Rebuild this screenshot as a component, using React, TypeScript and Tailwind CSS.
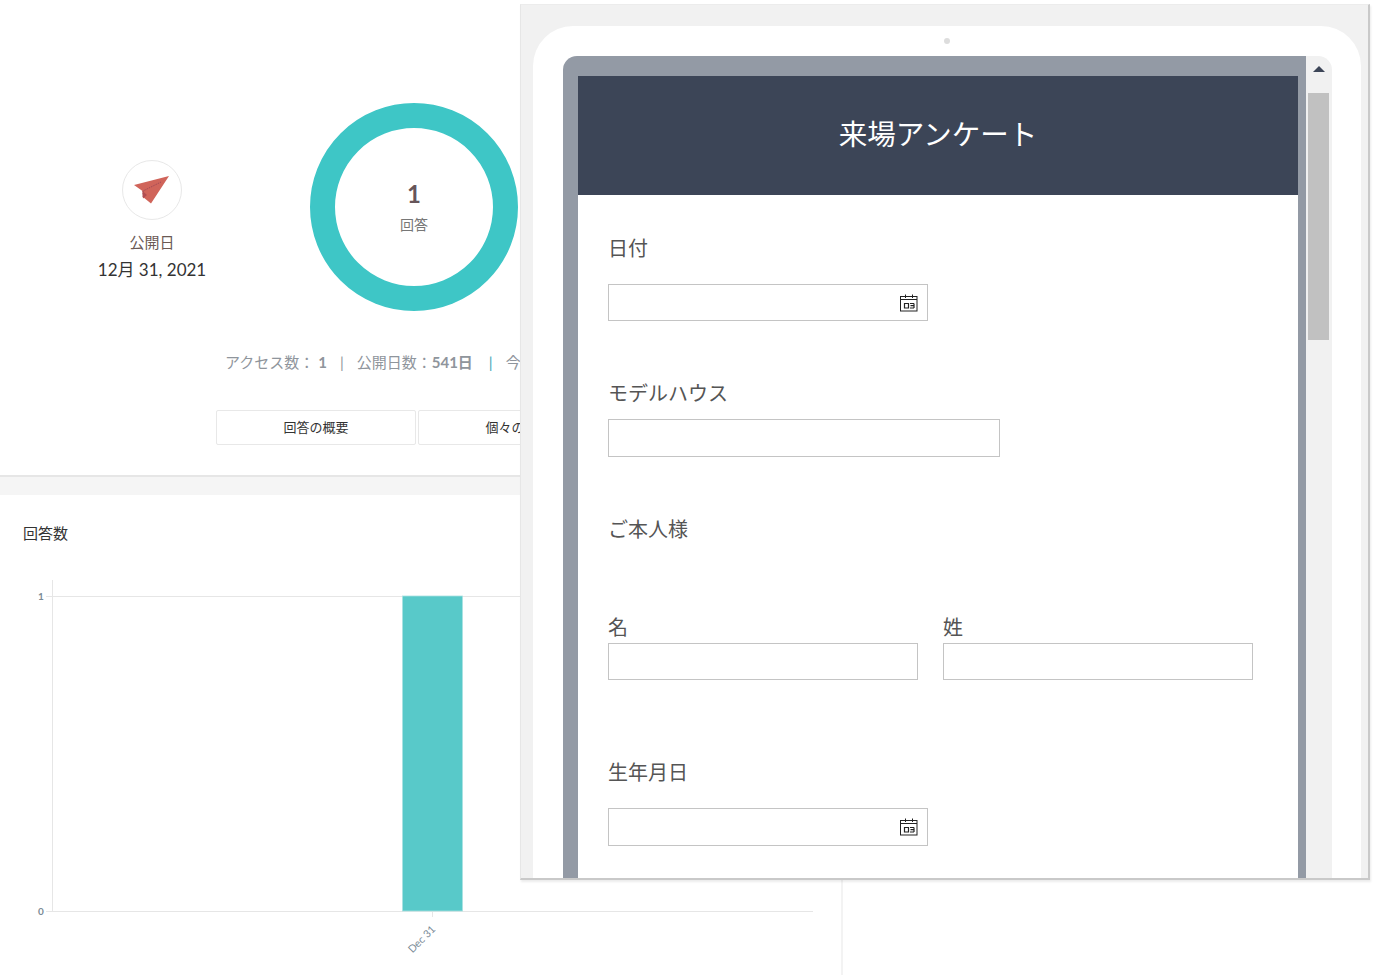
const font = { fontFamily: '"Lato","Noto Sans CJK JP",sans-serif' };

function CalIcon() {
  return (
    <svg width="18" height="18" viewBox="0 0 18 18" fill="none" stroke="#222" strokeWidth="1" className="absolute left-[291px] top-[9px]">
      <rect x="0.5" y="2.5" width="16.5" height="14.5" />
      <path d="M5.5 0.5v3.5M12.5 0.5v3.5M0.5 5.5h16.5" />
      <path d="M4.5 9.5h4v4.5h-4zM10 9.5h4M14 9.5v4.5M10.5 11.7h3.5M10 14h4" strokeWidth="1.2" />
    </svg>
  );
}

function Field({ w, h, cal, className = "" }: { w: string; h: string; cal?: boolean; className?: string }) {
  return (
    <div className={`relative border border-[#c4c4c4] bg-white ${w} ${h} ${className}`}>
      {cal && <CalIcon />}
    </div>
  );
}

function Label({ children, className = "" }: { children: React.ReactNode; className?: string }) {
  return <div className={`text-[20px] leading-[28px] text-[#555555] ${className}`}>{children}</div>;
}

function Background() {
  return (
    <div className="w-[843px] min-h-[975px]">
      <div className="h-[477px] border-b-2 border-[#e6e6e6] pt-[103px]">
        <div className="flex items-start">
          <div className="w-[304px] pt-[57px] flex flex-col items-center">
            <div className="w-[60px] h-[60px] rounded-full border border-[#e8e8e8] flex items-center justify-center">
              <svg width="36" height="30" viewBox="0 0 36 30">
                <path d="M0 10 35 1 17 28.5 9 22 9 23.5 8.5 16Z" fill="#d0645a" />
                <path d="M9 22 9 16 27 7" fill="none" stroke="#8e3f55" strokeWidth="0.7" strokeDasharray="1.5 1" />
                <path d="M9 23.5 8.5 16 13 20Z" fill="#b14e52" />
              </svg>
            </div>
            <div className="mt-[12px] text-[15px] leading-[20px] text-[#6b5a55]">公開日</div>
            <div className="mt-[5px] text-[17px] leading-[26px] text-[#333]">12月 31, 2021</div>
          </div>
          <div className="ml-[6px] w-[208px] h-[208px] rounded-full border-[25px] border-[#3ec6c6] flex flex-col items-center justify-start pt-[50px]">
            <div className="text-[24px] leading-[32px] font-bold text-[#66555a]">1</div>
            <div className="mt-[5px] text-[14px] leading-[20px] text-[#777]">回答</div>
          </div>
        </div>
        <div className="mt-[41px] ml-[225px] flex items-center whitespace-nowrap text-[15px] leading-[20px] text-[#8f959c]">
          <span>アクセス数：</span>
          <span className="ml-[4px] font-bold">1</span>
          <span className="ml-[13px]">|</span>
          <span className="ml-[13px]">公開日数：</span>
          <span className="font-bold">541日</span>
          <span className="ml-[16px] text-[#3ea6b8]">|</span>
          <span className="ml-[13px]">今</span>
        </div>
        <div className="mt-[38px] ml-[216px] flex gap-[2px] whitespace-nowrap text-[13px] text-[#333]">
          <div className="w-[200px] h-[35px] rounded-[2px] border border-[#e8e8e8] flex items-center justify-center">回答の概要</div>
          <div className="w-[200px] h-[35px] rounded-[2px] border border-[#e8e8e8] flex items-center justify-center">個々の回答</div>
        </div>
      </div>
      <div className="h-[18px] bg-[#f5f5f5]" />
      <div className="border-r-2 border-[#f3f3f3] h-[480px]">
        <div className="pt-[27px] pl-[23px] text-[15px] leading-[22px] text-[#333]">回答数</div>
        <svg width="841" height="420" viewBox="0 0 841 420" className="block mt-[36px]">
          <path d="M52.5 0V331M46 16.5H813M46 331.5H813M432.5 331V337" stroke="#e6e6e6" fill="none" />
          <rect x="402.5" y="16" width="60" height="315" fill="#58c9c9" stroke="#a8e2e2" strokeWidth="0.8" />
          <text x="41" y="20" textAnchor="middle" fontSize="10" fontWeight="700" fill="#7a8a96" fontFamily="Lato">1</text>
          <text x="41" y="335" textAnchor="middle" fontSize="10" fontWeight="700" fill="#7a8a96" fontFamily="Lato">0</text>
          <text x="0" y="0" fontSize="10.5" fill="#7a8a96" fontFamily="Lato" textAnchor="end" transform="translate(436 350) rotate(-45)">Dec 31</text>
        </svg>
      </div>
    </div>
  );
}

function Overlay() {
  return (
    <div className="absolute left-[520px] top-[4px] w-[850px] h-[876px] overflow-hidden bg-[#f1f1f1] border-l border-t border-l-[#e6e6e6] border-t-[#ececec] border-r-2 border-b-2 border-r-[#c9c9c9] border-b-[#c9c9c9] shadow-[1px_2px_2px_rgba(0,0,0,0.08)] pt-[21px] pl-[12px] pr-[7px]">
      <div className="relative h-[900px] rounded-t-[40px] bg-white pt-[30px] pl-[30px] pr-[29px]">
        <div className="absolute left-[411px] top-[12px] w-[6px] h-[6px] rounded-full bg-[#dddddd]" />
        <div className="flex h-[900px] rounded-t-[14px] overflow-hidden">
          <div className="w-[743px] shrink-0 bg-[#939aa5] pt-[20px] pl-[15px] pr-[8px]">
            <div className="h-full bg-white">
              <div className="h-[119px] pb-[3px] bg-[#3c4557] flex items-center justify-center text-[28.5px] text-white">来場アンケート</div>
              <div className="pl-[30px]">
                <Label className="pt-[39px]">日付</Label>
                <Field w="w-[320px]" h="h-[37px]" cal className="mt-[22px]" />
                <Label className="mt-[58px]">モデルハウス</Label>
                <Field w="w-[392px]" h="h-[38px]" className="mt-[12px]" />
                <Label className="mt-[58px]">ご本人様</Label>
                <div className="flex gap-[25px] mt-[70px]">
                  <div>
                    <Label className="h-[16px]">名</Label>
                    <Field w="w-[310px]" h="h-[37px]" className="mt-[14px]" />
                  </div>
                  <div>
                    <Label className="h-[16px]">姓</Label>
                    <Field w="w-[310px]" h="h-[37px]" className="mt-[14px]" />
                  </div>
                </div>
                <Label className="mt-[78px]">生年月日</Label>
                <Field w="w-[320px]" h="h-[38px]" cal className="mt-[22px]" />
              </div>
            </div>
          </div>
          <div className="relative w-[26px] shrink-0 bg-[#f1f1f1]">
            <div className="absolute left-[7px] top-[10px] w-0 h-0 border-x-[6px] border-x-transparent border-b-[6px] border-b-[#3c4557]" />
            <div className="absolute left-[2px] top-[37px] w-[21px] h-[247px] bg-[#c1c1c1]" />
          </div>
        </div>
      </div>
    </div>
  );
}

export default function App() {
  return (
    <div className="relative w-[1373px] h-[975px] overflow-hidden bg-white" style={font}>
      <Background />
      <Overlay />
    </div>
  );
}
